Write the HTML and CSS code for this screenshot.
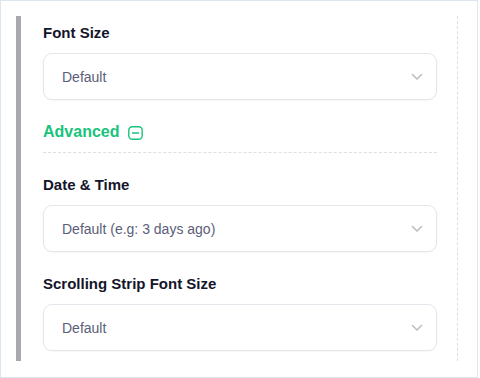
FILE: index.html
```html
<!DOCTYPE html>
<html>
<head>
<meta charset="utf-8">
<link rel="stylesheet" href="styles.css">
</head>
<body>
<div class="frame">
  <div class="panel">
    <div class="content">
      <div class="field">
        <div class="label">Font Size</div>
        <div class="select"><span>Default</span>
          <svg class="chev" width="12" height="8" viewBox="0 0 12 8"><path d="M1.5 1.5 L6 6 L10.5 1.5" fill="none" stroke="#bdbdc6" stroke-width="1.6" stroke-linecap="round" stroke-linejoin="round"/></svg>
        </div>
      </div>
      <div class="advanced">
        <span class="adv-text">Advanced</span>
        <svg class="adv-icon" width="15" height="14" viewBox="0 0 15 14"><rect x="0.8" y="0.8" width="13.4" height="12.4" rx="3.5" fill="none" stroke="#19c37d" stroke-width="1.4"/><path d="M4.5 7 H10.5" stroke="#19c37d" stroke-width="1.4" stroke-linecap="round"/></svg>
      </div>
      <div class="field">
        <div class="label">Date &amp; Time</div>
        <div class="select"><span>Default (e.g: 3 days ago)</span>
          <svg class="chev" width="12" height="8" viewBox="0 0 12 8"><path d="M1.5 1.5 L6 6 L10.5 1.5" fill="none" stroke="#bdbdc6" stroke-width="1.6" stroke-linecap="round" stroke-linejoin="round"/></svg>
        </div>
      </div>
      <div class="field">
        <div class="label">Scrolling Strip Font Size</div>
        <div class="select"><span>Default</span>
          <svg class="chev" width="12" height="8" viewBox="0 0 12 8"><path d="M1.5 1.5 L6 6 L10.5 1.5" fill="none" stroke="#bdbdc6" stroke-width="1.6" stroke-linecap="round" stroke-linejoin="round"/></svg>
        </div>
      </div>
    </div>
    <div class="rule"></div>
  </div>
</div>
</body>
</html>
```

FILE: styles.css
```css
html, body {
  margin: 0;
  padding: 0;
  background: #ffffff;
}
body {
  font-family: "Liberation Sans", Arial, Helvetica, sans-serif;
}
.frame {
  box-sizing: border-box;
  width: 478px;
  height: 378px;
  border: 1px solid #dde5ee;
  padding: 15px 0 0 15px;
}
.panel {
  display: flex;
  height: 345px;
}
.content {
  width: 394px;
  border-left: 5px solid #a9a9ad;
  padding-left: 22px;
}
.rule {
  margin-left: 20px;
  border-left: 1px dashed #dcdfe4;
}
.field {
  display: flex;
  flex-direction: column;
}
.label {
  font-size: 15px;
  font-weight: 700;
  color: #14152b;
  line-height: 20px;
  margin-top: 7px;
}
.field + .field .label,
.advanced + .field .label {
  margin-top: 22px;
}
.select {
  box-sizing: border-box;
  margin-top: 10px;
  height: 47px;
  border: 1px solid #e4e6ec;
  border-radius: 9px;
  display: flex;
  align-items: center;
  justify-content: space-between;
  padding: 0 13px 0 18px;
  font-size: 14px;
  color: #5a5e78;
  box-shadow: 0 1px 2px rgba(20, 30, 60, 0.04);
}
.chev {
  display: block;
}
.advanced {
  display: flex;
  align-items: flex-start;
  gap: 9px;
  margin-top: 21px;
  padding-bottom: 10px;
  border-bottom: 1px dashed #dcdfe4;
}
.adv-text {
  font-size: 16px;
  font-weight: 700;
  color: #19c37d;
  line-height: 20px;
  padding-top: 1px;
}
.adv-icon {
  display: block;
  margin-top: 5px;
}
```
